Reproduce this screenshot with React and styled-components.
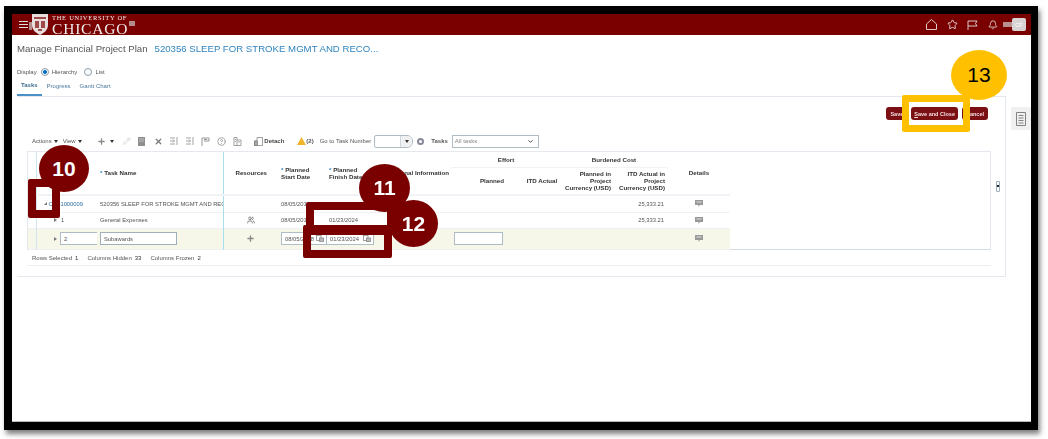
import React from "react";
import styled, { createGlobalStyle } from "styled-components";
import { Star, Bell, Pencil, X, Plus, ChevronDown, CircleHelp, Users } from "lucide-react";

const Global = createGlobalStyle`
  html, body { margin: 0; padding: 0; background: #fff; }
  body { width: 1048px; height: 439px; overflow: hidden; font-family: "Liberation Sans", Arial, sans-serif; }
  * { box-sizing: border-box; }
`;

const Frame = styled.div`
  position: relative;
  width: 1034px;
  height: 424px;
  margin: 6px 0 0 4px;
  border: solid #000;
  border-width: 8px 7px 8px 8px;
  box-shadow: 2px 4px 5px rgba(0, 0, 0, 0.5);
  background: #fff;
`;
const Screen = styled.div`
  height: 100%;
  overflow: hidden;
  border-bottom: 1px solid #bbb;
  filter: blur(0.35px);
`;

/* top bar */
const TopBar = styled.header`
  display: flex;
  align-items: center;
  height: 21px;
  background: #7a0000;
  padding: 0 5px 0 7px;
  color: #fff;
`;
const Burger = styled.div`
  width: 9px;
  height: 7px;
  margin-right: 1px;
  border-top: 1px solid #ddd;
  border-bottom: 1px solid #ddd;
  position: relative;
  &::after {
    content: "";
    position: absolute;
    left: 0;
    right: 0;
    top: 2px;
    height: 1px;
    background: #ddd;
  }
`;
const Crest = styled.svg`
  width: 20px;
  height: 21px;
  flex: none;
`;
const Wordmark = styled.div`
  margin-left: 3px;
  font-family: "Liberation Serif", serif;
  color: #eee;
  line-height: 1;
  align-self: flex-start;
`;
const WordSmall = styled.div`
  font-size: 6.5px;
  letter-spacing: 0.72px;
  margin-top: 1px;
`;
const WordBig = styled.div`
  font-size: 15.5px;
  letter-spacing: 0.8px;
  margin-top: -1px;
`;
const LogoTail = styled.div`
  width: 6px;
  height: 5px;
  margin: -3px 0 0 1px;
  background: #b58a8a;
`;
const TopIcons = styled.div`
  margin-left: auto;
  display: flex;
  align-items: center;
  gap: 9.5px;
  color: #e6dede;
`;
const AvatarWrap = styled.div`
  display: flex;
  align-items: center;
  margin-left: -4px;
`;
const AvatarBar = styled.div`
  width: 9px;
  height: 5px;
  background: #b98f8f;
`;
const Avatar = styled.div`
  width: 14px;
  height: 13px;
  border-radius: 2px;
  background: #d8d4d4;
  color: #fff;
  font-size: 5.5px;
  display: flex;
  align-items: center;
  justify-content: center;
`;

/* page */
const Page = styled.main`
  padding: 0 0 0 5px;
`;
const TitleRow = styled.div`
  display: flex;
  gap: 7px;
  height: 26px;
  align-items: center;
  font-size: 9.65px;
  color: #555;
`;
const TitleLink = styled.span`
  color: #2f84bf;
`;
const DisplayRow = styled.div`
  display: flex;
  align-items: center;
  margin-top: 5px;
  height: 12px;
  font-size: 6px;
  color: #555;
`;
const Radio = styled.span`
  width: 8px;
  height: 8px;
  border-radius: 50%;
  border: 1px solid #8a9aa5;
  margin: 0 3px 0 ${(p) => p.$gap}px;
  background: ${(p) => (p.$on ? "radial-gradient(circle, #0572ce 0 1.8px, #fff 2.2px)" : "#fff")};
`;
const Tabs = styled.div`
  display: flex;
  height: 18px;
  font-size: 6px;
  color: #4b7a9b;
`;
const Tab = styled.div`
  height: 100%;
  display: flex;
  align-items: center;
  padding: 0 4px 2px;
  margin-right: 1px;
  ${(p) => p.$active && "font-weight: bold; border-bottom: 2px solid #4a90c6; color: #3b6c90;"}
`;
const Work = styled.div`
  display: flex;
  align-items: flex-start;
`;
const Panel = styled.section`
  width: 989px;
  height: 181px;
  border: 1px solid #e3e8ee;
  border-left-color: #fff;
  padding: 0 14px 0 9px;
`;
const SideRail = styled.div`
  width: 20px;
  height: 23px;
  margin: 11px 0 0 5px;
  background: #f0f0f0;
  color: #777;
  display: flex;
  align-items: center;
  justify-content: center;
`;
const Actions = styled.div`
  display: flex;
  justify-content: flex-end;
  gap: 4px;
  height: 13px;
  margin-top: 10px;
  padding-right: 3px;
`;
const Btn = styled.button`
  height: 13px;
  padding: 0 ${(p) => p.$pad}px;
  border: 0;
  border-radius: 3px;
  background: #7a0f14;
  color: #f4dede;
  font: bold 5.5px "Liberation Sans", sans-serif;
  white-space: nowrap;
`;

/* toolbar */
const Toolbar = styled.div`
  display: flex;
  align-items: center;
  height: 12px;
  margin-top: 15px;
  padding-left: 5px;
  font-size: 6px;
  color: #555;
`;
const Menu = styled.span`
  display: flex;
  align-items: center;
  gap: 2px;
  margin-right: ${(p) => p.$mr}px;
`;
const Caret = styled.i`
  width: 0;
  height: 0;
  border: 2.5px solid transparent;
  border-top: 3.5px solid #333;
  border-bottom: 0;
`;
const ToolIcon = styled.span`
  display: flex;
  flex: none;
  width: 9px;
  margin-right: ${(p) => p.$mr ?? 6.75}px;
  color: ${(p) => p.$color || "#8a8a8a"};
`;
const DetachLabel = styled.b`
  color: #444;
  margin-right: 13px;
`;
const GoLabel = styled.span`
  font-weight: ${(p) => (p.$bold ? "bold" : "normal")};
  margin-right: ${(p) => p.$mr}px;
  white-space: nowrap;
`;
const Combo = styled.div`
  display: flex;
  flex: none;
  width: 39px;
  height: 13px;
  border: 1px solid #aebcc6;
  border-radius: 2px 6px 6px 2px;
  margin-right: 4px;
  overflow: hidden;
`;
const ComboArrow = styled.div`
  margin-left: auto;
  width: 12px;
  background: #eef0f2;
  border-left: 1px solid #cfd6dc;
  display: flex;
  align-items: center;
  justify-content: center;
`;
const GoDot = styled.span`
  flex: none;
  width: 7px;
  height: 7px;
  border-radius: 50%;
  border: 2px solid #889;
  margin-right: 7px;
`;
const SelectBox = styled.div`
  flex: none;
  width: 87px;
  height: 13px;
  border: 1px solid #aebcc6;
  display: flex;
  align-items: center;
  justify-content: space-between;
  padding: 0 4px 0 2px;
  color: #888;
`;

/* table */
const TableBox = styled.div`
  position: relative;
  width: 964px;
  height: 99px;
  margin-top: 4px;
  border: 1px solid #e4e9ef;
  border-bottom: 1px solid #d4dce4;
`;
const Grid = styled.table`
  width: 702px;
  table-layout: fixed;
  border-collapse: collapse;
  font-size: 5.8px;
  color: #555;
`;
const Head = styled.th`
  font-weight: bold;
  font-size: 6.2px;
  color: #333;
  line-height: 7.2px;
  padding: ${(p) => (p.$flush ? "0 2px" : "0 2px 0 3px")};
  ${(p) => p.$inset && `padding-right: ${p.$inset}px;`}
  text-align: ${(p) => p.$align || "center"};
  vertical-align: middle;
  border-bottom: ${(p) => (p.$thin ? "1px solid #f0f2f5" : "2px solid #f0f2f5")};
  ${(p) => p.$frozen && "border-right: 1px solid #a8dfec;"}
  ${(p) => p.$rail && "border-left: 1px solid #cfe6ee;"}
`;
const Req = styled.span`
  color: #2f84bf;
`;
const Row = styled.tr`
  height: ${(p) => p.$h}px;
  background: ${(p) => (p.$hot ? "#f7f7e9" : "transparent")};
  border-bottom: 1px solid #eef0f3;
`;
const Cell = styled.td`
  padding: 0 3px;
  text-align: ${(p) => p.$align || "left"};
  white-space: nowrap;
  overflow: hidden;
  ${(p) => p.$tight && "padding-left: 0;"}
  ${(p) => p.$frozen && "border-right: 1px solid #a8dfec;"}
  ${(p) => p.$rail && "border-left: 1px solid #cfe6ee;"}
`;
const NumWrap = styled.div`
  display: flex;
  align-items: center;
  gap: ${(p) => p.$gap}px;
  padding-left: ${(p) => p.$indent}px;
`;
const Tri = styled.i`
  width: 0;
  height: 0;
  border: solid transparent;
  border-width: 2px 0 2px 3px;
  border-left-color: #777;
  flex: none;
`;
const OpenTri = styled.i`
  width: 0;
  height: 0;
  border-bottom: 3.5px solid #777;
  border-left: 3.5px solid transparent;
  flex: none;
`;
const BlueText = styled.span`
  color: #2f6fa5;
`;
const Field = styled.div`
  display: flex;
  flex: none;
  align-items: center;
  justify-content: space-between;
  width: ${(p) => p.$w}px;
  height: 13px;
  padding: 0 2px 0 3px;
  background: #fff;
  border: 1px solid ${(p) => p.$border || "#aebcc6"};
  ${(p) => p.$open && "border-right: 0;"}
  color: #555;
`;
const CalIcon = styled.svg`
  width: 8px;
  height: 7px;
  flex: none;
`;
const NoteIcon = styled.svg`
  width: 8px;
  height: 7px;
  display: block;
  margin: 0 auto;
`;
const Handle = styled.div`
  position: absolute;
  left: 968px;
  top: 29px;
  width: 4px;
  height: 11px;
  border: 1px solid #9ab;
  background: #fff;
  border-radius: 1px;
  &::after {
    content: "";
    display: block;
    width: 2px;
    height: 2px;
    margin-top: 3px;
    background: #222;
  }
`;
const Footer = styled.div`
  width: 964px;
  display: flex;
  gap: 9px;
  height: 16px;
  align-items: center;
  padding-left: 5px;
  font-size: 6px;
  color: #555;
  border-bottom: 1px solid #eceff3;
`;
const Stat = styled.span`
  b {
    font-weight: normal;
    color: #333;
    margin-left: 3px;
  }
`;

/* callouts drawn over the screenshot */
const Bubble = styled.div`
  position: absolute;
  left: ${(p) => p.$x - 12}px;
  top: ${(p) => p.$y - 14}px;
  width: ${(p) => p.$w}px;
  height: ${(p) => p.$h}px;
  border-radius: 50%;
  background: ${(p) => p.$bg};
  color: ${(p) => p.$fg};
  display: flex;
  align-items: center;
  justify-content: center;
  font-size: 21px;
  font-weight: ${(p) => (p.$plain ? "normal" : "bold")};
`;
const Marker = styled.div`
  position: absolute;
  left: ${(p) => p.$x - 12}px;
  top: ${(p) => p.$y - 14}px;
  width: ${(p) => p.$w}px;
  height: ${(p) => p.$h}px;
  border: ${(p) => p.$b || 8}px solid ${(p) => p.$color};
  ${(p) => p.$top && `border-top-width: ${p.$top}px;`}
  border-radius: 2px;
`;

const IndentGlyph = () => (
  <svg width="9" height="8" viewBox="0 0 9 8" fill="none" stroke="currentColor" strokeWidth="0.8">
    <path d="M0 1h5M0 7h5M0 4h4M3 2.500 4.500 4 3 5.500M7 0v8" />
  </svg>
);
const FlagGlyph = () => (
  <svg width="9" height="9" viewBox="0 0 9 9" fill="none" stroke="currentColor" strokeWidth="0.9">
    <path d="M1 9V1h7v3H3M3 2.500h3" />
  </svg>
);
const DocGlyph = () => (
  <svg width="8" height="9" viewBox="0 0 8 9">
    <path d="M0 0h7v9H0z" fill="#8f8f8f" />
    <path d="M1 2h5M1 4h5" stroke="#ddd" strokeWidth="0.6" />
  </svg>
);
const StackGlyph = () => (
  <svg width="9" height="9" viewBox="0 0 9 9" fill="none" stroke="currentColor" strokeWidth="0.8">
    <path d="M1 .5h3v8H1zM4 3h4v5.500H4M2 2.500h1M2 4.500h1M5 5h2" />
  </svg>
);
const DetachGlyph = () => (
  <svg width="9" height="9" viewBox="0 0 9 9" fill="none" stroke="#777" strokeWidth="0.7">
    <path d="M3 .5h5.500V8.500H.5V4H3z" />
    <path d="M.5 4h3v4.500h-3z" fill="#aaa" />
  </svg>
);
const Cal = () => (
  <CalIcon viewBox="0 0 8 7" fill="none" stroke="#888" strokeWidth="0.8">
    <rect x="0.500" y="0.500" width="4.500" height="5" />
    <rect x="3.500" y="3" width="4" height="3.500" fill="#bbb" />
  </CalIcon>
);
const Note = () => (
  <NoteIcon viewBox="0 0 8 7">
    <path d="M0 0h8v5H5L3.500 7V5H0z" fill="#999" />
    <path d="M1.500 1.500h5v1h-5z" fill="#ddd" />
  </NoteIcon>
);

const Toolbox = () => (
  <Toolbar>
    <Menu $mr={5}>Actions <Caret /></Menu>
    <Menu $mr={15}>View <Caret /></Menu>
    <ToolIcon $mr={4}><Plus size={9} strokeWidth={3.5} /></ToolIcon>
    <Menu $mr={9}><Caret /></Menu>
    <ToolIcon $color="#ccc"><Pencil size={8} /></ToolIcon>
    <ToolIcon><DocGlyph /></ToolIcon>
    <ToolIcon $color="#777"><X size={9} strokeWidth={3.5} /></ToolIcon>
    <ToolIcon><IndentGlyph /></ToolIcon>
    <ToolIcon><IndentGlyph /></ToolIcon>
    <ToolIcon><FlagGlyph /></ToolIcon>
    <ToolIcon><CircleHelp size={9} /></ToolIcon>
    <ToolIcon $mr={12.5}><StackGlyph /></ToolIcon>
    <ToolIcon $mr={1}><DetachGlyph /></ToolIcon>
    <DetachLabel>Detach</DetachLabel>
    <ToolIcon $mr={0}>
      <svg width="9" height="8" viewBox="0 0 9 8"><path d="M4.500 0 9 8H0z" fill="#f0b429" /></svg>
    </ToolIcon>
    <GoLabel $bold $mr={6}>(2)</GoLabel>
    <GoLabel $mr={3}>Go to Task Number</GoLabel>
    <Combo>
      <ComboArrow><Caret /></ComboArrow>
    </Combo>
    <GoDot />
    <GoLabel $bold $mr={4}>Tasks</GoLabel>
    <SelectBox>All tasks<ChevronDown size={7} color="#333" strokeWidth={3} /></SelectBox>
  </Toolbar>
);

export default function App() {
  return (
    <>
      <Global />
      <Frame>
        <Screen>
          <TopBar>
            <Burger />
            <Crest viewBox="0 0 20 21">
              <rect x="0" y="8" width="3" height="8" fill="#b58a8a" />
              <path d="M3 0h16v11c0 5-4 8-8 10-4-2-8-5-8-10z" fill="#e8dede" />
              <path d="M5 3h12v2H5zM6 7h4v7H6zM12 7h4v7h-4zM9 15h4v2H9z" fill="#9c4a4a" />
            </Crest>
            <Wordmark>
              <WordSmall>THE UNIVERSITY OF</WordSmall>
              <WordBig>CHICAGO</WordBig>
            </Wordmark>
            <LogoTail />
            <TopIcons>
              <svg width="11" height="11" viewBox="0 0 11 11" fill="none" stroke="currentColor" strokeWidth="0.9"><path d="M.5 5 5.500.5l5 4.500v5.500H.5z" /></svg>
              <Star size={11} />
              <svg width="11" height="10" viewBox="0 0 11 10" fill="none" stroke="currentColor" strokeWidth="0.9"><path d="M1 10V1h9L8.500 3.500 10 6H1" /></svg>
              <Bell size={10} />
              <AvatarWrap>
                <AvatarBar />
                <Avatar>CF</Avatar>
              </AvatarWrap>
            </TopIcons>
          </TopBar>
          <Page>
            <TitleRow>
              Manage Financial Project Plan
              <TitleLink>520356 SLEEP FOR STROKE MGMT AND RECO...</TitleLink>
            </TitleRow>
            <DisplayRow>
              Display<Radio $on $gap={4} />Hierarchy<Radio $gap={7} />List
            </DisplayRow>
            <Tabs>
              <Tab $active>Tasks</Tab>
              <Tab>Progress</Tab>
              <Tab>Gantt Chart</Tab>
            </Tabs>
            <Work>
              <Panel>
                <Actions>
                  <Btn $pad={4}>Save</Btn>
                  <Btn $pad={3}><u>S</u>ave and Close</Btn>
                  <Btn $pad={4}>Cancel</Btn>
                </Actions>
                <Toolbox />
                <TableBox>
                  <Grid>
                    <colgroup>
                      <col width="8" />
                      <col width="61" />
                      <col width="126" />
                      <col width="55" />
                      <col width="48" />
                      <col width="49" />
                      <col width="76" />
                      <col width="73" />
                      <col width="36" />
                      <col width="53" />
                      <col width="54" />
                      <col width="63" />
                    </colgroup>
                    <thead>
                      <tr style={{ height: 15 }}>
                        <Head rowSpan={2} />
                        <Head rowSpan={2} $align="left" $rail><Req>*</Req></Head>
                        <Head rowSpan={2} $align="left" $frozen><Req>*</Req> Task Name</Head>
                        <Head rowSpan={2}>Resources</Head>
                        <Head rowSpan={2} $align="left"><Req>*</Req> Planned<br />Start Date</Head>
                        <Head rowSpan={2} $align="left"><Req>*</Req> Planned<br />Finish Date</Head>
                        <Head rowSpan={2} $align="right" $flush>Additional Information</Head>
                        <Head colSpan={2} $thin>Effort</Head>
                        <Head colSpan={2} $thin>Burdened Cost</Head>
                        <Head rowSpan={2}>Details</Head>
                      </tr>
                      <tr style={{ height: 28 }}>
                        <Head $align="right" $inset={20}>Planned</Head>
                        <Head $flush>ITD Actual</Head>
                        <Head $align="right" $flush>Planned in<br />Project<br />Currency (USD)</Head>
                        <Head $align="right" $flush>ITD Actual in<br />Project<br />Currency (USD)</Head>
                      </tr>
                    </thead>
                    <tbody>
                      <Row $h={17}>
                        <Cell />
                        <Cell $rail><NumWrap $indent={4} $gap={2}><OpenTri /><BlueText>CO41000009</BlueText></NumWrap></Cell>
                        <Cell $frozen>520356 SLEEP FOR STROKE MGMT AND REC</Cell>
                        <Cell />
                        <Cell>08/05/2018</Cell>
                        <Cell>01/23/2024</Cell>
                        <Cell /><Cell /><Cell /><Cell />
                        <Cell $align="right">25,333.21</Cell>
                        <Cell><Note /></Cell>
                      </Row>
                      <Row $h={16}>
                        <Cell />
                        <Cell $rail><NumWrap $indent={14} $gap={4.5}><Tri />1</NumWrap></Cell>
                        <Cell $frozen>General Expenses</Cell>
                        <Cell $align="center"><Users size={8} color="#888" strokeWidth={3} /></Cell>
                        <Cell>08/05/2018</Cell>
                        <Cell>01/23/2024</Cell>
                        <Cell /><Cell /><Cell /><Cell />
                        <Cell $align="right">25,333.21</Cell>
                        <Cell><Note /></Cell>
                      </Row>
                      <Row $h={21} $hot>
                        <Cell />
                        <Cell $rail><NumWrap $indent={14} $gap={3.5}><Tri /><Field $w={37} $open>2</Field></NumWrap></Cell>
                        <Cell $frozen><Field $w={77} $border="#9fb0bc">Subawards</Field></Cell>
                        <Cell $align="center"><Plus size={9} color="#888" strokeWidth={3.5} /></Cell>
                        <Cell><Field $w={45} $open>08/05/2018<Cal /></Field></Cell>
                        <Cell $tight><Field $w={48}>01/23/2024<Cal /></Field></Cell>
                        <Cell />
                        <Cell><Field $w={49} /></Cell>
                        <Cell /><Cell /><Cell />
                        <Cell><Note /></Cell>
                      </Row>
                    </tbody>
                  </Grid>
                  <Handle />
                </TableBox>
                <Footer>
                  <Stat>Rows Selected<b>1</b></Stat>
                  <Stat>Columns Hidden<b>33</b></Stat>
                  <Stat>Columns Frozen<b>2</b></Stat>
                </Footer>
              </Panel>
              <SideRail>
                <svg width="10" height="14" viewBox="0 0 10 14" fill="none" stroke="currentColor" strokeWidth="0.9">
                  <path d="M.5.5h9v13h-9zM2.500 3.500h5M2.500 6h5M2.500 8.500h5M2.500 11h5" />
                </svg>
              </SideRail>
            </Work>
          </Page>
        </Screen>

        <Bubble $x={39} $y={145} $w={50} $h={47} $bg="#7a0000" $fg="#fff">10</Bubble>
        <Marker $x={28} $y={179} $w={32} $h={39} $color="#7a0000" />
        <Marker $x={306} $y={202} $w={89} $h={33} $color="#7a0000" />
        <Marker $x={303} $y={225} $w={89} $h={33} $color="#7a0000" $top={10} />
        <Bubble $x={359} $y={164} $w={51} $h={48} $bg="#7a0000" $fg="#fff">11</Bubble>
        <Bubble $x={389} $y={200} $w={49} $h={47} $bg="#7a0000" $fg="#fff">12</Bubble>
        <Bubble $x={951} $y={50} $w={56} $h={50} $bg="#ffc000" $fg="#000" $plain>13</Bubble>
        <Marker $x={902} $y={95} $w={68} $h={37} $b={7} $color="#ffc000" />
      </Frame>
    </>
  );
}
